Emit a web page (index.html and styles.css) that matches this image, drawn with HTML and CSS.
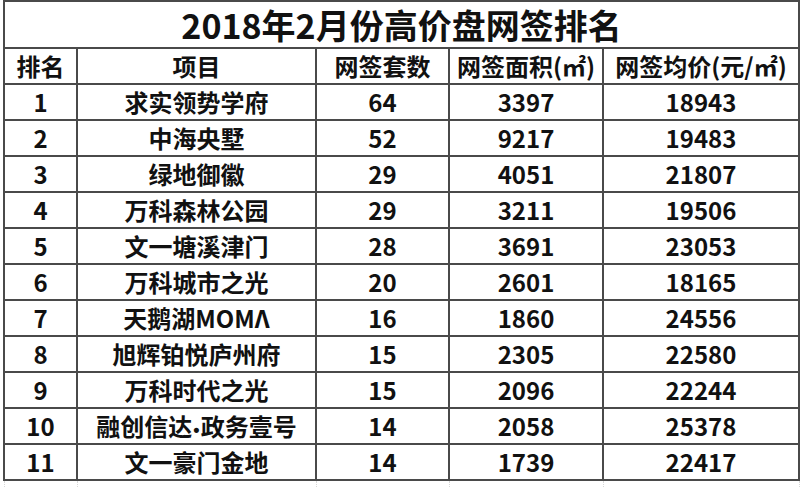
FILE: index.html
```html
<!DOCTYPE html>
<html lang="zh-CN">
<head>
<meta charset="utf-8">
<title>2018年2月份高价盘网签排名</title>
<link rel="stylesheet" href="styles.css">
</head>
<body>
<div class="page">
<table class="rank">
  <colgroup>
    <col class="c1"><col class="c2"><col class="c3"><col class="c4"><col class="c5">
  </colgroup>
  <tr class="title-row"><td colspan="5">2018年2月份高价盘网签排名</td></tr>
  <tr class="row head"><td>排名</td><td>项目</td><td>网签套数</td><td>网签面积(㎡)</td><td>网签均价(元/㎡)</td></tr>
  <tr class="row"><td>1</td><td>求实领势学府</td><td>64</td><td>3397</td><td>18943</td></tr>
  <tr class="row"><td>2</td><td>中海央墅</td><td>52</td><td>9217</td><td>19483</td></tr>
  <tr class="row"><td>3</td><td>绿地御徽</td><td>29</td><td>4051</td><td>21807</td></tr>
  <tr class="row"><td>4</td><td>万科森林公园</td><td>29</td><td>3211</td><td>19506</td></tr>
  <tr class="row"><td>5</td><td>文一塘溪津门</td><td>28</td><td>3691</td><td>23053</td></tr>
  <tr class="row"><td>6</td><td>万科城市之光</td><td>20</td><td>2601</td><td>18165</td></tr>
  <tr class="row"><td>7</td><td>天鹅湖MOMΛ</td><td>16</td><td>1860</td><td>24556</td></tr>
  <tr class="row"><td>8</td><td>旭辉铂悦庐州府</td><td>15</td><td>2305</td><td>22580</td></tr>
  <tr class="row"><td>9</td><td>万科时代之光</td><td>15</td><td>2096</td><td>22244</td></tr>
  <tr class="row"><td>10</td><td>融创信达<span class="dot">•</span>政务壹号</td><td>14</td><td>2058</td><td>25378</td></tr>
  <tr class="row"><td>11</td><td>文一豪门金地</td><td>14</td><td>1739</td><td>22417</td></tr>
  <tr class="grid-row"><td></td><td></td><td></td><td></td><td></td></tr>
</table>
</div>
</body>
</html>
```
FILE: styles.css
```css
html, body {
  margin: 0;
  padding: 0;
  background: #ffffff;
}
.page {
  padding: 0 0 0 3px;
  width: 800px;
  height: 488px;
  overflow: hidden;
  box-sizing: border-box;
}
.rank {
  border-collapse: collapse;
  table-layout: fixed;
  width: 795px;
  margin-top: 0;
  font-family: "Noto Sans CJK SC", "Noto Sans", sans-serif;
  font-weight: 700;
  color: #111;
}
.c1 { width: 73px; }
.c2 { width: 239px; }
.c3 { width: 133px; }
.c4 { width: 154px; }
.c5 { width: 196px; }
.rank td {
  border: 2px solid #4a4a4a;
  padding: 0;
  text-align: center;
  vertical-align: middle;
  white-space: nowrap;
}
.title-row td {
  height: 45px;
  font-size: 34px;
  line-height: 45px;
  letter-spacing: 0;
}
.row td {
  height: 34px;
  font-size: 24px;
  line-height: 30px;
}
.head td {
  height: 34px;
}
.dot {
  font-family: "Liberation Sans", sans-serif;
  font-size: 18px;
  line-height: 1;
  padding: 0 1px;
}
.grid-row td {
  height: 10px;
  border-top: 2px solid #4a4a4a;
  border-bottom: none;
  border-left: 1px dotted #d8d8d8;
  border-right: 1px dotted #d8d8d8;
}
```
